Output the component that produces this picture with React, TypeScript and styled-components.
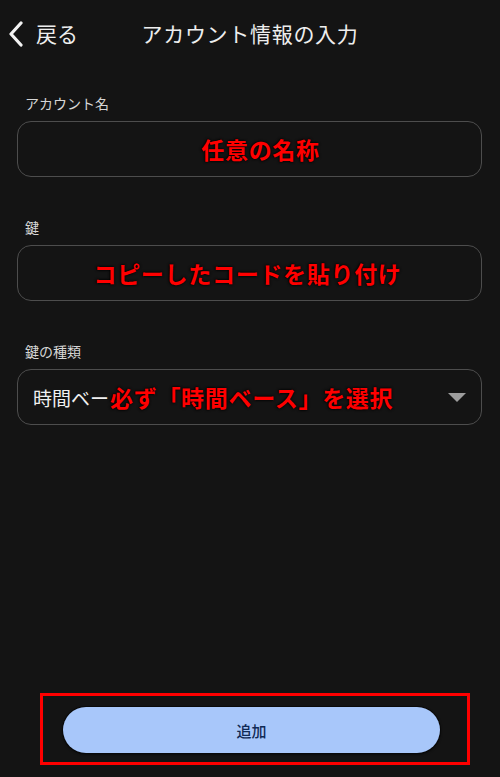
import React from "react";
import styled, { createGlobalStyle } from "styled-components";

const GlobalStyle = createGlobalStyle`
    html, body {
        margin: 0;
        padding: 0;
        background-color: #141414;
    }
    * {
        box-sizing: border-box;
    }
    body {
        font-family: "Noto Sans CJK JP", "Noto Sans", sans-serif;
        color: #e8e8e8;
    }
`;

const Page = styled.div`
    width: 500px;
    height: 777px;
    display: flex;
    flex-direction: column;
    background-color: #141414;
    overflow: hidden;
`;

const Header = styled.header`
    height: 66px;
    display: grid;
    grid-template-columns: 1fr auto 1fr;
    align-items: center;
    padding: 0 8px;
`;

const Back = styled.div`
    display: flex;
    align-items: center;
    gap: 12px;
    font-size: 21px;
    color: #eeeeee;
    > svg {
        margin-top: 1px;
    }
`;

const Title = styled.div`
    font-size: 21px;
    letter-spacing: 0.7px;
    color: #eeeeee;
`;

const Form = styled.main`
    display: flex;
    flex-direction: column;
    gap: 40px;
    padding: 27px 18px 0 17px;
`;

const Field = styled.div`
    display: flex;
    flex-direction: column;
    gap: 8px;
`;

const Label = styled.label`
    padding-left: 8px;
    font-size: 14px;
    line-height: 20px;
    color: #d6d6d6;
`;

const InputBox = styled.div<{ $align: "center" | "start" }>`
    height: 56px;
    border: 1.5px solid #4d4d4d;
    border-radius: 14px;
    display: flex;
    align-items: center;
    justify-content: ${(props) =>
        props.$align === "center" ? "center" : "flex-start"};
    padding: 0 15px;
    position: relative;
`;

// red hint written over the field
const Note = styled.span<{ $shift: number }>`
    margin-left: ${(props) => props.$shift}px;
    font-size: 23px;
    font-weight: 700;
    color: #ff0000;
    letter-spacing: 0.7px;
    text-shadow: 0 0 3px #000, 0 0 2px #000;
`;

const Value = styled.span`
    font-size: 19px;
    color: #f0f0f0;
`;

const Caret = styled.span`
    position: absolute;
    right: 15px;
    top: 50%;
    margin-top: -4px;
    width: 0;
    height: 0;
    border-left: 9px solid transparent;
    border-right: 9px solid transparent;
    border-top: 9px solid #9d9d9d;
`;

const Footer = styled.footer`
    margin-top: auto;
    padding: 0 0 12px 40px;
`;

const Frame = styled.div`
    width: 430px;
    height: 72px;
    border: 3px solid #ff0000;
    padding: 11px 27px 0 20px;
`;

const AddButton = styled.button`
    width: 100%;
    height: 46px;
    border: none;
    border-radius: 23px;
    background-color: #a8c7fa;
    box-shadow: 0 0 0 1px #0a0a0a, 0 1px 3px rgba(0, 0, 0, 0.9);
    font-family: "Noto Sans CJK JP", "Noto Sans", sans-serif;
    font-size: 15px;
    font-weight: 500;
    color: #102a55;
    cursor: pointer;
`;

function ChevronLeft() {
    return (
        <svg width="16" height="26" viewBox="0 0 16 26" fill="none">
            <path
                d="M13 2 L3 13 L13 24"
                stroke="#f2f2f2"
                strokeWidth="3.2"
                strokeLinecap="round"
                strokeLinejoin="round"
            />
        </svg>
    );
}

function App() {
    return (
        <Page>
            <GlobalStyle />
            <Header>
                <Back>
                    <ChevronLeft />
                    <span>戻る</span>
                </Back>
                <Title>アカウント情報の入力</Title>
                <div />
            </Header>

            <Form>
                <Field>
                    <Label>アカウント名</Label>
                    <InputBox $align="center">
                        <Note $shift={22}>任意の名称</Note>
                    </InputBox>
                </Field>
                <Field>
                    <Label>鍵</Label>
                    <InputBox $align="center">
                        <Note $shift={-4}>コピーしたコードを貼り付け</Note>
                    </InputBox>
                </Field>
                <Field>
                    <Label>鍵の種類</Label>
                    <InputBox $align="start">
                        <Value>時間ベー</Value>
                        <Note $shift={1}>必ず「時間ベース」を選択</Note>
                        <Caret />
                    </InputBox>
                </Field>
            </Form>

            <Footer>
                <Frame>
                    <AddButton>追加</AddButton>
                </Frame>
            </Footer>
        </Page>
    );
}

export default App;
